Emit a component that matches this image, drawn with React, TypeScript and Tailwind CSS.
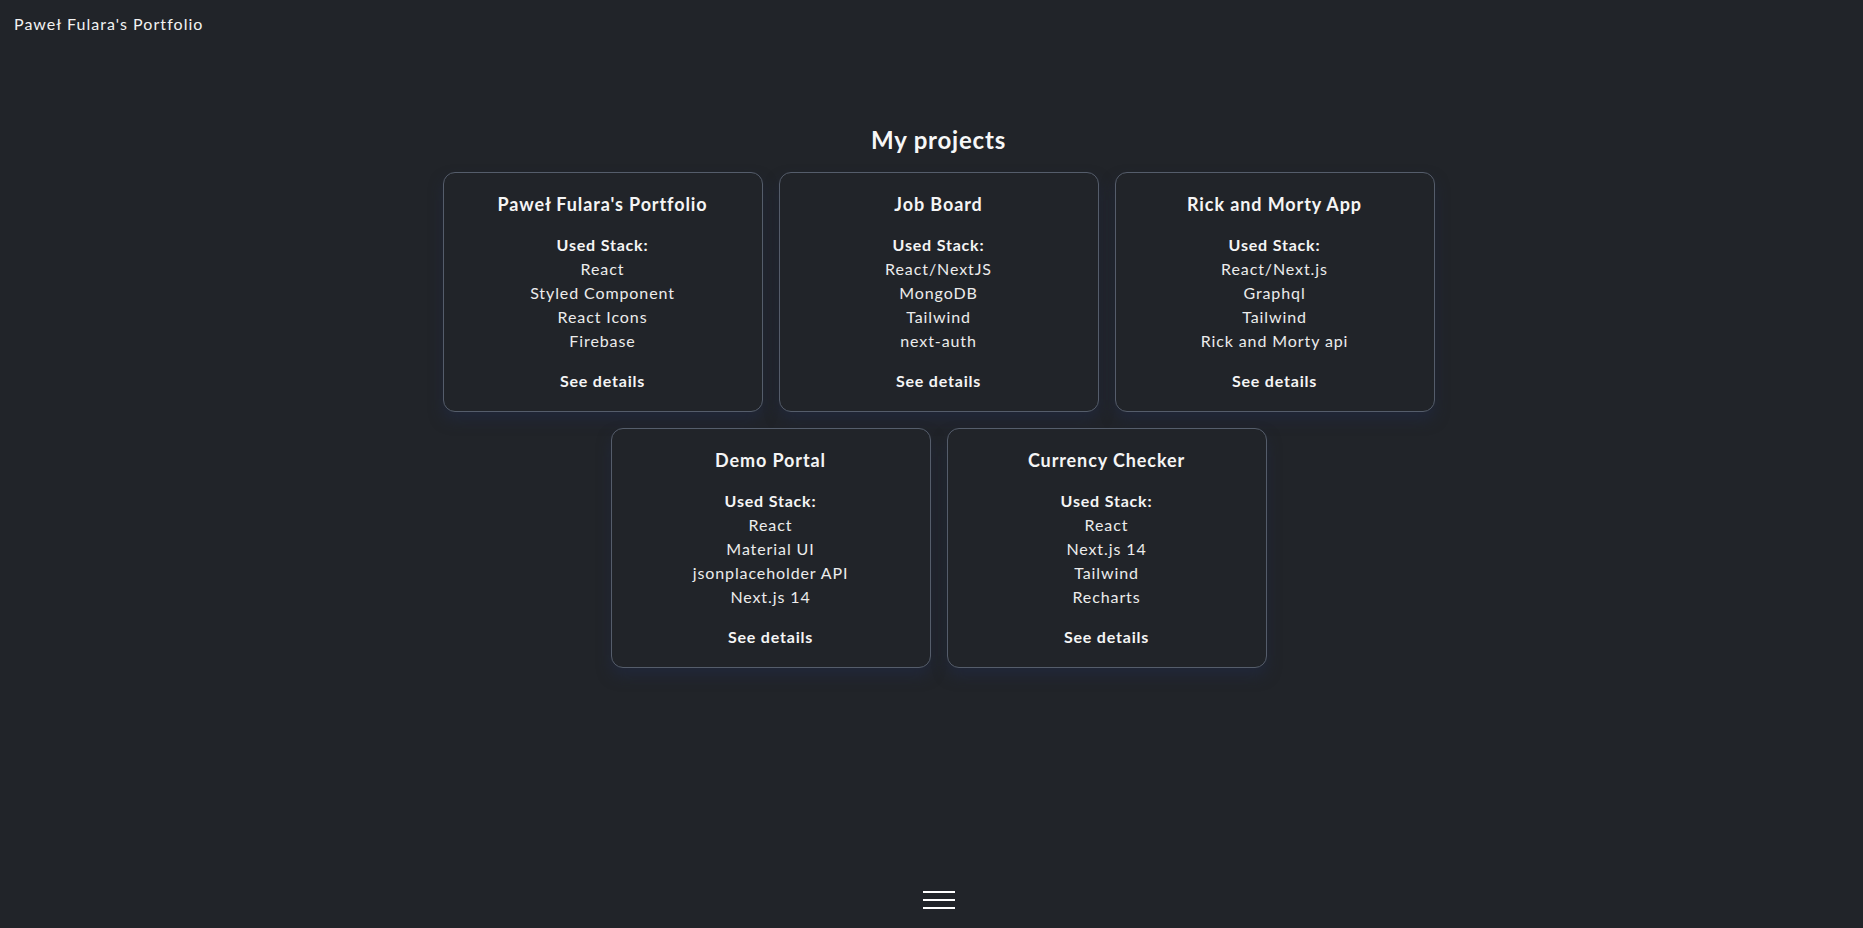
const projects = [
  { title: "Paweł Fulara's Portfolio", stack: ['React', 'Styled Component', 'React Icons', 'Firebase'] },
  { title: 'Job Board', stack: ['React/NextJS', 'MongoDB', 'Tailwind', 'next-auth'] },
  { title: 'Rick and Morty App', stack: ['React/Next.js', 'Graphql', 'Tailwind', 'Rick and Morty api'] },
  { title: 'Demo Portal', stack: ['React', 'Material UI', 'jsonplaceholder API', 'Next.js 14'] },
  { title: 'Currency Checker', stack: ['React', 'Next.js 14', 'Tailwind', 'Recharts'] },
]

const ProjectCard = ({ title, stack }: { title: string; stack: string[] }) => (
  <article className="flex w-[320px] flex-col items-center rounded-xl border border-[#555d6b] bg-[#212429] pb-[18px] pt-[17px] text-center shadow-[0_8px_14px_rgba(32,42,70,0.55)]">
    <h3 className="mb-[15px] text-lg font-bold leading-7 tracking-[0.9px] text-[#f5f5f5]">{title}</h3>
    <p className="text-base font-bold leading-6 tracking-[0.8px] text-[#f5f5f5]">Used Stack:</p>
    <ul className="text-base leading-6 tracking-[0.9px] text-[#ececec]">
      {stack.map((item) => (
        <li key={item}>{item}</li>
      ))}
    </ul>
    <button type="button" className="mt-4 text-base font-bold leading-6 tracking-[0.8px] text-[#f5f5f5]">
      See details
    </button>
  </article>
)

export default function App() {
  return (
    <div className="min-h-screen bg-[#212429] font-['Lato','Noto_Sans',sans-serif] text-[#f2f2f2]">
      <header className="px-[14px] pt-3">
        <span className="text-base leading-6 tracking-[1.05px]">Paweł Fulara's Portfolio</span>
      </header>

      <main className="pl-[14px] pt-[88px]">
        <h2 className="mb-4 text-center text-2xl font-bold leading-8 tracking-[0.8px] text-[#f7f7f7]">My projects</h2>
        <div className="mx-auto flex w-[992px] flex-wrap justify-center gap-4">
          {projects.map((project) => (
            <ProjectCard key={project.title} title={project.title} stack={project.stack} />
          ))}
        </div>
      </main>

      <nav className="fixed inset-x-0 bottom-[19px] flex justify-center pl-[14px]">
        <button type="button" aria-label="Menu" className="flex flex-col gap-[6px]">
          <span className="block h-[2px] w-8 bg-white" />
          <span className="block h-[2px] w-8 bg-white" />
          <span className="block h-[2px] w-8 bg-white" />
        </button>
      </nav>
    </div>
  )
}
